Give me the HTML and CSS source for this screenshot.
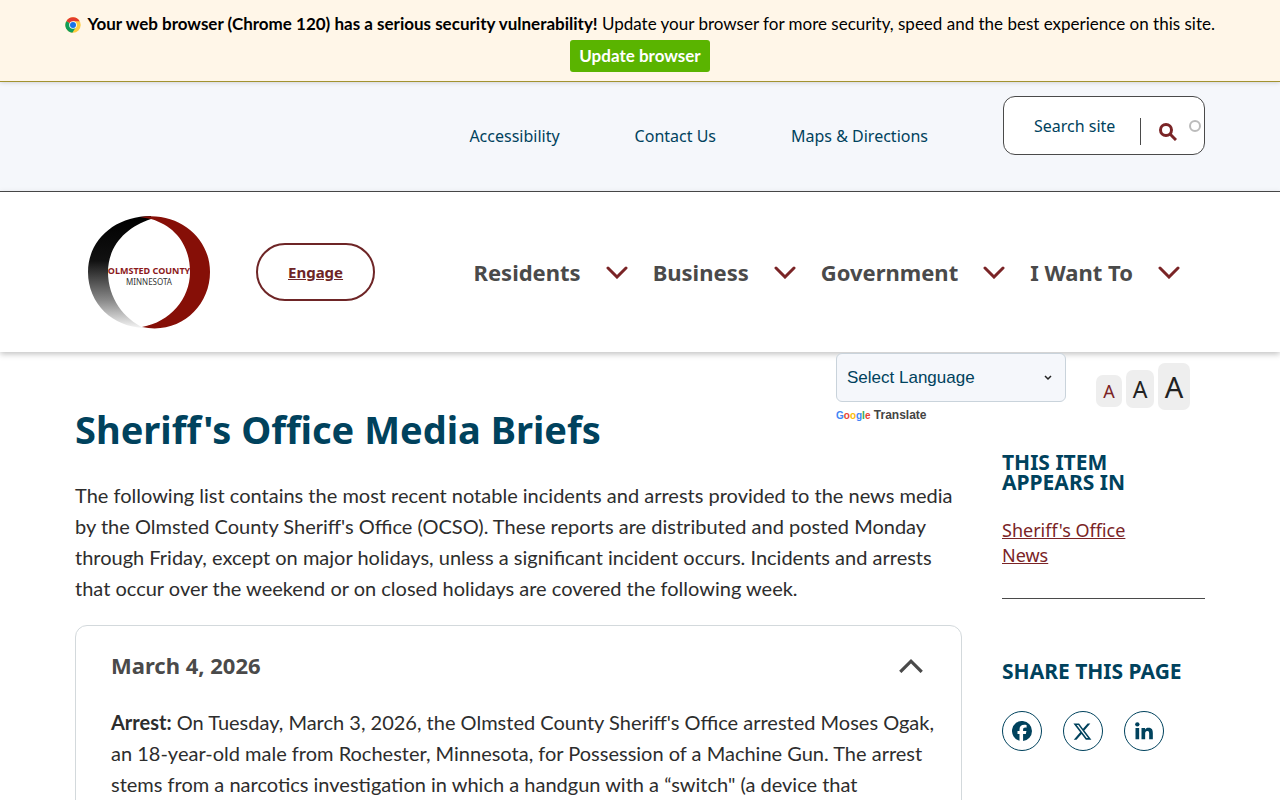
FILE: index.html
```
<!DOCTYPE html>
<html lang="en">
	<head>
		<meta charset="utf-8">
		<meta name="viewport" content="width=device-width, initial-scale=1.0">
		<title>Sheriff's Office Media Briefs</title>
		<link rel="stylesheet" href="styles.css">
	</head>

	<body>
		<div id="buorg">
			<p>
				<svg class="chrome" viewBox="0 0 48 48" aria-hidden="true">
					<circle cx="24" cy="24" r="23" fill="#ffcd40"/>
					<path d="M24 24 4 12.500A23 23 0 0 1 44 12.500L24 13z" fill="#e33b2e"/>
					<path d="M4 12.500A23 23 0 0 0 22 47l11.500-17.500L24 24z" fill="#109d59"/>
					<circle cx="24" cy="24" r="11.500" fill="#fff"/>
					<circle cx="24" cy="24" r="9" fill="#1a73e8"/>
				</svg>
				<b>Your web browser (Chrome 120) has a serious security vulnerability!</b>
				Update your browser for more security, speed and the best experience on this site.
			</p>
			<button type="button">Update browser</button>
		</div>

		<div class="topbar">
			<nav class="toplinks">
				<a href="#">Accessibility</a>
				<a href="#">Contact Us</a>
				<a href="#">Maps &amp; Directions</a>
			</nav>
			<form class="search">
				<input type="text" placeholder="Search site" aria-label="Search site">
				<button type="button" aria-label="Search">
					<svg viewBox="0 0 18 18"><circle cx="7" cy="7" r="5.500"/><path d="M11 11l6 6"/></svg>
				</button>
				<span class="throbber"></span>
			</form>
		</div>

		<header>
			<a class="logo" href="#">
				<svg viewBox="0 0 124 114" role="img" aria-label="Olmsted County Minnesota">
					<defs>
						<linearGradient id="fade" x1="0" y1="0" x2="0" y2="1">
							<stop offset="0" stop-color="#000"/>
							<stop offset=".4" stop-color="#111"/>
							<stop offset=".75" stop-color="#888"/>
							<stop offset="1" stop-color="#f4f4f4"/>
						</linearGradient>
					</defs>
					<path fill="url(#fade)" d="M64 1C28 1 1 25 1 57s25 55 56 56C37 104 21 83 21 57S39 12 64 4z"/>
					<path fill="#860f07" d="M53 2C91-4 123 22 123 57s-31 63-68 55c28-5 48-28 48-55S88 11 64 4z"/>
					<text class="county" x="62" y="59">OLMSTED COUNTY</text>
					<text class="state" x="62" y="70">MINNESOTA</text>
				</svg>
			</a>
			<a class="engage" href="#">Engage</a>
			<nav class="mainnav">
				<button type="button">Residents <svg viewBox="0 0 22 14"><path d="M2 3l9 9 9-9"/></svg></button>
				<button type="button">Business <svg viewBox="0 0 22 14"><path d="M2 3l9 9 9-9"/></svg></button>
				<button type="button">Government <svg viewBox="0 0 22 14"><path d="M2 3l9 9 9-9"/></svg></button>
				<button type="button">I Want To <svg viewBox="0 0 22 14"><path d="M2 3l9 9 9-9"/></svg></button>
			</nav>
		</header>

		<div class="pagehead">
			<h1>Sheriff's Office Media Briefs</h1>
			<div class="translate">
				<div class="selectwrap">
					<select aria-label="Select Language">
						<option>Select Language</option>
					</select>
					<svg viewBox="0 0 8 6"><path d="M1 1l3 3 3-3"/></svg>
				</div>
				<p><span class="google"><i>G</i><i>o</i><i>o</i><i>g</i><i>l</i><i>e</i></span> Translate</p>
			</div>
			<div class="textsize">
				<button type="button" class="small">A</button>
				<button type="button" class="medium">A</button>
				<button type="button" class="large">A</button>
			</div>
		</div>

		<div class="content">
			<main>
				<p>The following list contains the most recent notable incidents and arrests provided to the news media
				by the Olmsted County Sheriff's Office (OCSO). These reports are distributed and posted Monday<br>
				through Friday, except on major holidays, unless a significant incident occurs. Incidents and arrests<br>
				that occur over the weekend or on closed holidays are covered the following week.</p>

				<article>
					<button type="button" class="toggle">March 4, 2026 <svg viewBox="0 0 22 14"><path d="M1 13l10-10 10 10"/></svg></button>
					<p><b>Arrest:</b> On Tuesday, March 3, 2026, the Olmsted County Sheriff's Office arrested Moses Ogak,<br>
					an 18-year-old male from Rochester, Minnesota, for Possession of a Machine Gun. The arrest<br>
					stems from a narcotics investigation in which a handgun with a “switch" (a device that</p>
				</article>
			</main>

			<aside>
				<section>
					<h2>This item appears in</h2>
					<a href="#">Sheriff's Office News</a>
				</section>
				<h2 class="sharetitle">Share this page</h2>
				<div class="share">
					<a href="#" aria-label="Facebook"><svg viewBox="0 0 24 24"><path d="M24 12a12 12 0 1 0-15 11.600v-8H6.600V12H9v-1.600C9 6.300 10.900 4.400 14.900 4.400c.8 0 2.100.1 2.600.3V8c-.3 0-.8-.1-1.400-.1-2 0-2.800.8-2.800 2.700V12h4l-.7 3.600h-3.300v8.300A12 12 0 0 0 24 12z"/></svg></a>
					<a href="#" aria-label="X"><svg viewBox="0 0 24 24"><path d="M17.500 3h3.300l-7.200 8.300L22.100 22.400h-6.700l-5.200-6.800-6 6.800H.9l7.700-8.800L.5 3h6.800L12 9.200zm-1.200 17.500h1.800L6.400 4.800h-2z"/></svg></a>
					<a href="#" aria-label="LinkedIn"><svg viewBox="0 0 24 24"><circle cx="4" cy="4" r="2.600"/><path d="M1.800 8.500h4.400V22H1.800zM9 8.500h4.200v1.900c.8-1.400 2.200-2.200 4.200-2.200 4.400 0 5.200 2.900 5.200 6.600V22h-4.400v-6.600c0-1.600 0-3.500-2.200-3.500s-2.600 1.700-2.600 3.400V22H9z"/></svg></a>
				</div>
			</aside>
		</div>
	</body>
</html>
```
FILE: styles.css
```
*{
	box-sizing: border-box;
}
body{
	margin: 0;
	font-family: "Noto Sans", "Open Sans", sans-serif;
	font-size: 18px;
	color: #2d2d2d;
	background-color: white;
}
p, h1, h2{
	margin: 0;
}
button{
	font-family: inherit;
	border: 0;
	padding: 0;
	background: none;
}
svg{
	display: block;
	fill: none;
}

/* browser warning */
#buorg{
	position: relative;
	padding: 8px 16px 9px;
	text-align: center;
	font-family: Lato, sans-serif;
	font-size: 17px;
	line-height: 32px;
	color: black;
	background-color: #fff6e8;
	border-bottom: 1px solid #a29330;
	box-shadow: 0 0 5px rgba(0,0,0,.2);
}
.chrome{
	display: inline-block;
	width: 16px;
	height: 16px;
	vertical-align: -3px;
	margin-right: 2px;
}
#buorg button{
	display: block;
	margin: 0 auto;
	padding: 0 9px;
	font-size: 17px;
	font-weight: bold;
	line-height: 32px;
	color: white;
	background-color: #5ab400;
	border-radius: 3px;
}

.topbar{
	display: flex;
	justify-content: flex-end;
	align-items: flex-start;
	gap: 75px;
	padding: 14px 75px 36px;
	background-color: #f5f7fb;
	border-bottom: 1px solid #4a4a4a;
}
.toplinks{
	display: flex;
	gap: 75px;
	padding-top: 28px;
	line-height: 24px;
}
.toplinks a{
	font-size: 16px;
	color: #00425d;
	text-decoration: none;
}
.search{
	display: flex;
	width: 202px;
	height: 59px;
	background-color: white;
	border: 1px solid #4a4a4a;
	border-radius: 12px;
}
.search input{
	width: 106px;
	height: 58px;
	margin-left: 30px;
	padding: 0;
	border: 0;
	background: none;
	font: inherit;
	font-size: 16px;
}
.search input::placeholder{
	color: #00425d;
}
.search button{
	height: 27px;
	margin-top: 21px;
	padding-left: 18px;
	border-left: 1px solid #4a4a4a;
}
.search svg{
	width: 18px;
	height: 18px;
	stroke: #7a2426;
	stroke-width: 3;
}
.throbber{
	width: 12px;
	height: 12px;
	margin: 23px 0 0 12px;
	border: 2px solid #bbb;
	border-radius: 50%;
}

header{
	position: relative;
	display: flex;
	align-items: center;
	height: 160px;
	padding: 0 100px 0 87px;
	background-color: white;
	box-shadow: 0 2px 6px rgba(0,0,0,.25);
}
.logo svg{
	width: 124px;
	height: 114px;
}
.logo text{
	font-family: "Noto Sans", sans-serif;
	font-size: 9px;
	text-anchor: middle;
	fill: #333;
}
.logo .county{
	font-weight: bold;
	fill: #8c1a1c;
}
.logo .state{
	font-size: 8px;
}
.engage{
	margin-left: 45px;
	padding: 17px 30px;
	border: 2px solid #6e2526;
	border-radius: 29px;
	font-size: 15px;
	font-weight: bold;
	line-height: 20px;
	color: #6e2526;
}
.mainnav{
	display: flex;
	gap: 25px;
	margin-left: auto;
}
.mainnav button{
	display: flex;
	align-items: center;
	gap: 25px;
	font-size: 22px;
	font-weight: bold;
	line-height: 32px;
	color: #4a4a4a;
}
.mainnav svg{
	width: 22px;
	height: 14px;
	stroke: #7a2426;
	stroke-width: 3;
	stroke-linecap: round;
}

.pagehead{
	display: flex;
	align-items: flex-start;
	padding: 0 90px 0 75px;
}
h1{
	flex: 1;
	padding-top: 54px;
	font-size: 38px;
	line-height: 46px;
	color: #00425d;
}
.translate{
	width: 230px;
	padding-top: 1px;
}
.selectwrap{
	position: relative;
}
.selectwrap svg{
	position: absolute;
	right: 14px;
	top: 22px;
	width: 8px;
	height: 6px;
	stroke: #222;
	stroke-width: 1.5;
}
.translate select{
	appearance: none;
	display: block;
	width: 100%;
	height: 49px;
	padding: 0 10px;
	font-family: "Liberation Sans", sans-serif;
	font-size: 17px;
	color: #00425d;
	background-color: #f5f7fb;
	border: 1px solid #c9d3db;
	border-radius: 6px;
}
.translate p{
	padding-top: 4px;
	font-family: "Liberation Sans", sans-serif;
	font-size: 12px;
	font-weight: bold;
	line-height: 18px;
	color: #444;
}
.google{
	font-size: 10px;
}
.google i{
	font-style: normal;
	color: #4285f4;
}
.google i:nth-child(2), .google i:nth-child(6){
	color: #ea4335;
}
.google i:nth-child(3){
	color: #fbbc05;
}
.google i:nth-child(5){
	color: #34a853;
}
.textsize{
	display: flex;
	align-items: center;
	gap: 4px;
	margin-left: 30px;
	padding-top: 11px;
}
.textsize button{
	width: 26px;
	height: 32px;
	margin-top: 8px;
	font-size: 18px;
	color: #222;
	background-color: #eee;
	border-radius: 7px;
}
.textsize .small{
	color: #7a2426;
}
.textsize .medium{
	width: 28px;
	height: 38px;
	margin-top: 4px;
	font-size: 23px;
}
.textsize .large{
	width: 32px;
	height: 47px;
	margin-top: 0;
	font-size: 29px;
}

.content{
	display: grid;
	grid-template-columns: 1fr 203px;
	gap: 40px;
	padding: 0 75px;
}
main{
	padding-top: 28px;
}
main p{
	font-family: Lato, sans-serif;
	font-size: 20px;
	line-height: 31px;
}
article{
	margin-top: 21px;
	padding: 23px 18px 23px 35px;
	border: 1px solid #d3d9dc;
	border-radius: 12px;
}
.toggle{
	display: flex;
	justify-content: space-between;
	align-items: center;
	width: 100%;
	margin-bottom: 26px;
	padding-right: 20px;
	font-size: 22px;
	font-weight: bold;
	line-height: 32px;
	color: #4a4a4a;
}
.toggle svg{
	width: 24px;
	height: 15px;
	stroke: #4a4a4a;
	stroke-width: 3;
}

h2{
	max-width: 160px;
	font-size: 21px;
	line-height: 20px;
	text-transform: uppercase;
	color: #00425d;
}
.sharetitle{
	max-width: none;
}
aside section{
	margin-bottom: 62px;
	padding-bottom: 30px;
	border-bottom: 1px solid #4a4a4a;
}
aside section a{
	display: block;
	width: 150px;
	margin-top: 26px;
	line-height: 25px;
	color: #7a2426;
}
.share{
	display: flex;
	gap: 21px;
	margin-top: 30px;
}
.share a{
	display: flex;
	align-items: center;
	justify-content: center;
	width: 40px;
	height: 40px;
	border: 1px solid #00425d;
	border-radius: 50%;
}
.share svg{
	width: 20px;
	height: 20px;
	fill: #00425d;
}
```
